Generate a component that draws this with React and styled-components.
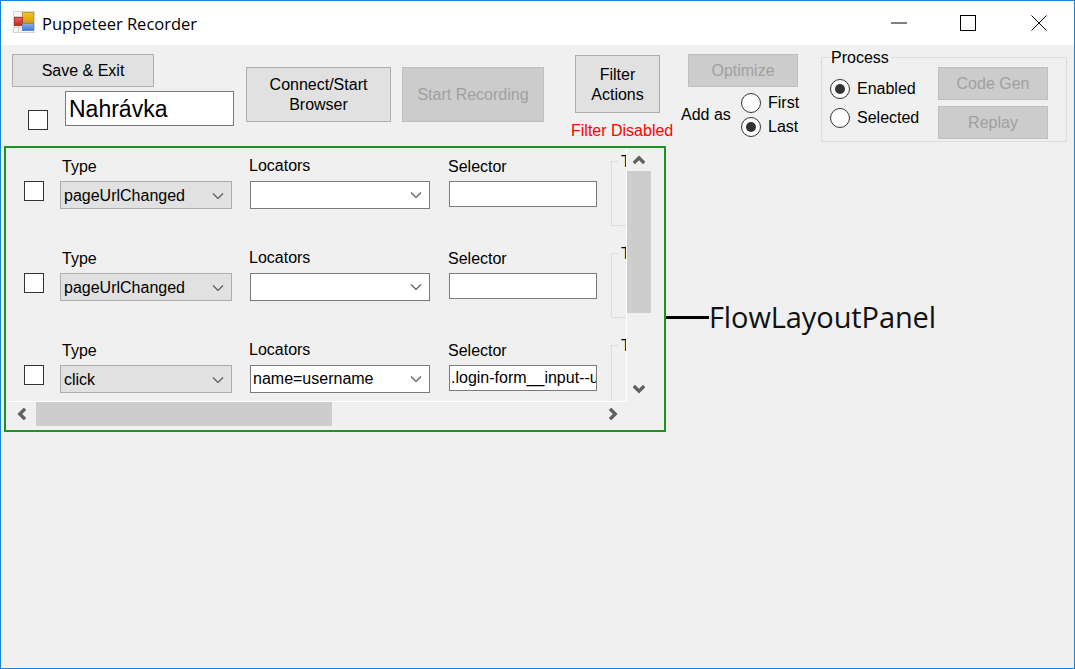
import React from 'react';
import styled, { createGlobalStyle } from 'styled-components';

const GlobalStyle = createGlobalStyle`
  html, body {
    margin: 0;
    padding: 0;
    background: #f0f0f0;
  }
  * {
    box-sizing: border-box;
  }
`;

const Window = styled.div`
  width: 1075px;
  height: 669px;
  border: 1px solid #1883d7;
  background: #f0f0f0;
  font-family: "Liberation Sans", Arial, sans-serif;
  font-size: 16px;
  color: #000;
  overflow: hidden;
`;

const TitleBar = styled.div`
  height: 44px;
  background: #fff;
  display: flex;
  align-items: center;
  padding-left: 12px;
`;

const AppIcon = styled.svg`
  width: 22px;
  height: 22px;
  margin-right: 7px;
  margin-top: -2px;
`;

const Title = styled.div`
  font-family: "Open Sans", sans-serif;
  font-size: 16.5px;
  flex: 1;
`;

const WinButton = styled.div`
  width: 71px;
  height: 44px;
  display: flex;
  align-items: center;
  justify-content: center;
  padding-left: ${p => p.$shift || 0}px;
`;

const Toolbar = styled.div`
  height: 101px;
  display: flex;
  align-items: flex-start;
  padding-left: 11px;
`;

const SaveColumn = styled.div`
  width: 222px;
  padding-top: 9px;
`;

const NameRow = styled.div`
  display: flex;
  align-items: flex-end;
  margin-top: 4px;
  padding-left: 16px;
`;

const Button = styled.div`
  display: flex;
  align-items: center;
  justify-content: center;
  text-align: center;
  line-height: 20px;
  flex-shrink: 0;
  width: ${p => p.$w}px;
  height: ${p => p.$h}px;
  margin-top: ${p => p.$top || 0}px;
  margin-left: ${p => p.$left || 0}px;
  padding-top: ${p => p.$pad || 0}px;
  background: ${p => (p.$disabled ? '#cccccc' : '#e1e1e1')};
  border: 1px solid ${p => (p.$disabled ? '#bfbfbf' : '#adadad')};
  color: ${p => (p.$disabled ? '#a0a0a0' : '#000')};
`;

const CheckBox = styled.div`
  width: 20px;
  height: 20px;
  flex-shrink: 0;
  background: #fff;
  border: 1px solid #333;
`;

const NameInput = styled.div`
  width: 169px;
  height: 35px;
  margin-left: 17px;
  margin-bottom: 4px;
  padding-left: 3px;
  background: #fff;
  border: 1px solid #7a7a7a;
  font-size: 23px;
  line-height: 35px;
`;

const FilterColumn = styled.div`
  width: 113px;
  flex-shrink: 0;
  margin-left: 31px;
  padding-top: 10px;
`;

const FilterStatus = styled.div`
  color: #ff0000;
  margin-top: 9px;
  margin-left: -4px;
  white-space: nowrap;
  line-height: 18px;
`;

const OptimizeColumn = styled.div`
  width: 133px;
  flex-shrink: 0;
  padding-top: 9px;
`;

const AddAsRow = styled.div`
  display: flex;
  align-items: center;
  margin-top: 6px;
  margin-left: -7px;
`;

const AddAsLabel = styled.div`
  width: 60px;
`;

const RadioStack = styled.div`
  display: flex;
  flex-direction: column;
  gap: 4px;
`;

const RadioRow = styled.div`
  display: flex;
  align-items: center;
  gap: 7px;
  height: 20px;
`;

const Radio = styled.div`
  width: 20px;
  height: 20px;
  border-radius: 50%;
  background: #fff;
  border: 1px solid #333;
  display: flex;
  align-items: center;
  justify-content: center;

  &::after {
    content: '';
    width: 10px;
    height: 10px;
    border-radius: 50%;
    background: ${p => (p.$checked ? '#333' : 'transparent')};
  }
`;

const GroupBox = styled.fieldset`
  width: 246px;
  height: 95px;
  margin: 2px 0 0 0;
  padding: 0 0 0 8px;
  border: 1px solid #dcdcdc;
  display: flex;
  flex-shrink: 0;
  min-width: 0;

  legend {
    padding: 2px 2px 0 1px;
    margin-left: 0;
    line-height: 18px;
  }
`;

const ProcessRadios = styled.div`
  width: 108px;
  margin-top: 12px;
  display: flex;
  flex-direction: column;
  gap: 9px;
`;

const ProcessButtons = styled.div`
  display: flex;
  flex-direction: column;
  gap: 6px;
`;

const FlowPanel = styled.div`
  width: 662px;
  height: 286px;
  margin-left: 3px;
  border: 2px solid #1b9420;
  display: grid;
  grid-template-columns: 621px 24px;
  grid-template-rows: 254px 24px;
  flex-shrink: 0;
`;

const Viewport = styled.div`
  overflow: hidden;
  border-right: 1px solid #fff;
  border-bottom: 1px solid #fff;
`;

const ActionRow = styled.div`
  height: 92px;
  display: flex;
  align-items: flex-start;
  padding-left: 18px;
`;

const RowCheck = styled(CheckBox)`
  margin-top: 33px;
`;

const Field = styled.div`
  width: ${p => p.$w}px;
  margin-left: ${p => p.$left}px;
  flex-shrink: 0;
`;

const FieldLabel = styled.div`
  height: 18px;
  line-height: 18px;
  white-space: nowrap;
  margin-top: ${p => p.$top}px;
  margin-left: ${p => p.$left || 0}px;
  margin-bottom: ${p => p.$bottom}px;
`;

const Combo = styled.div`
  height: 28px;
  display: flex;
  align-items: center;
  padding: ${p => (p.$flat ? '1px 7px 0 3px' : '0 7px 0 2px')};
  background: ${p => (p.$flat ? '#e1e1e1' : '#fff')};
  border: 1px solid ${p => (p.$flat ? '#adadad' : '#7a7a7a')};

  svg {
    margin-left: auto;
  }
`;

const TextBox = styled.div`
  height: 26px;
  line-height: 24px;
  padding-left: 1px;
  background: #fff;
  border: 1px solid #7a7a7a;
  overflow: hidden;
  white-space: nowrap;
`;

const NextGroup = styled.div`
  width: 30px;
  height: 65px;
  margin-top: 13px;
  margin-left: 14px;
  flex-shrink: 0;
  border: 1px solid #dcdcdc;
  border-right: none;
  position: relative;

  &::before {
    content: 'T';
    position: absolute;
    left: 6px;
    top: -9px;
    padding-left: 3px;
    line-height: 18px;
    background: #f0f0f0;
  }
`;

const VScroll = styled.div`
  display: flex;
  flex-direction: column;
  align-items: center;
  width: 24px;
  padding-bottom: 2px;
`;

const ScrollArrow = styled.div`
  height: 23px;
  width: 24px;
  display: flex;
  align-items: center;
  justify-content: center;
  flex-shrink: 0;
`;

const VThumb = styled.div`
  width: 24px;
  height: 142px;
  background: #cdcdcd;
`;

const Spacer = styled.div`
  flex: 1;
`;

const HScroll = styled.div`
  display: flex;
  align-items: stretch;
  height: 24px;
  padding-left: 6px;
`;

const HArrow = styled.div`
  width: 24px;
  display: flex;
  align-items: center;
  justify-content: center;
  padding-right: ${p => p.$inset}px;
`;

const HThumb = styled.div`
  width: 296px;
  background: #cdcdcd;
`;

const CalloutRow = styled.div`
  display: flex;
`;

const Callout = styled.div`
  display: flex;
  align-items: center;
  height: 30px;
  margin-top: 156px;
`;

const CalloutLine = styled.div`
  width: 43px;
  height: 3px;
  background: #000;
`;

const CalloutText = styled.div`
  font-family: "Open Sans", sans-serif;
  font-size: 29px;
  letter-spacing: -0.1px;
  color: #111;
  white-space: nowrap;
  margin-top: -2px;
`;

const Chevron = ({ d }) => (
  <svg width="12" height="12" viewBox="0 0 12 12">
    <path d={d} fill="none" stroke="#606060" strokeWidth="3.4" />
  </svg>
);

const DropArrow = () => (
  <svg width="12" height="8" viewBox="0 0 12 8">
    <path d="M1 1.5 L6 6.5 L11 1.5" fill="none" stroke="#555" strokeWidth="1.1" />
  </svg>
);

const actions = [
  { id: 1, type: 'pageUrlChanged', locator: '', selector: '' },
  { id: 2, type: 'pageUrlChanged', locator: '', selector: '' },
  { id: 3, type: 'click', locator: 'name=username', selector: '.login-form__input--username' },
];

const App = () => (
  <Window>
    <GlobalStyle />
    <TitleBar>
      <AppIcon viewBox="0 0 22 22">
        <defs>
          <linearGradient id="iconYellow" x1="0" y1="0" x2="0" y2="1">
            <stop offset="0" stopColor="#f2c438" />
            <stop offset="1" stopColor="#dc9a08" />
          </linearGradient>
          <linearGradient id="iconRed" x1="0" y1="0" x2="0" y2="1">
            <stop offset="0" stopColor="#e8675c" />
            <stop offset="1" stopColor="#b92a22" />
          </linearGradient>
          <linearGradient id="iconBlue" x1="0" y1="0" x2="0" y2="1">
            <stop offset="0" stopColor="#8db4ec" />
            <stop offset="1" stopColor="#3f74cf" />
          </linearGradient>
        </defs>
        <rect x="0.5" y="0.5" width="21" height="21" fill="#f6f6f6" stroke="#d4d4d4" />
        <path d="M1 5.5H9M5.5 15V21M1 16.5H9" stroke="#d4d4d4" />
        <rect x="9.5" y="1.5" width="11" height="10" fill="url(#iconYellow)" stroke="#c89a20" />
        <rect x="1.5" y="6.5" width="8" height="8" fill="url(#iconRed)" stroke="#a83a30" />
        <rect x="9.5" y="12.5" width="11" height="7" fill="url(#iconBlue)" stroke="#5f8ad0" />
      </AppIcon>
      <Title>Puppeteer Recorder</Title>
      <WinButton $shift={5}>
        <svg width="16" height="2" viewBox="0 0 16 2"><path d="M0 1H16" stroke="#000" strokeWidth="1" /></svg>
      </WinButton>
      <WinButton>
        <svg width="16" height="16" viewBox="0 0 16 16"><rect x="0.5" y="0.5" width="15" height="15" fill="none" stroke="#000" /></svg>
      </WinButton>
      <WinButton $shift={1}>
        <svg width="16" height="16" viewBox="0 0 16 16"><path d="M0.5 0.5L15.5 15.5M15.5 0.5L0.5 15.5" stroke="#000" strokeWidth="1" /></svg>
      </WinButton>
    </TitleBar>

    <Toolbar>
      <SaveColumn>
        <Button $w={142} $h={33}>Save &amp; Exit</Button>
        <NameRow>
          <CheckBox />
          <NameInput>Nahrávka</NameInput>
        </NameRow>
      </SaveColumn>
      <Button $w={145} $h={55} $top={22} $left={12}>Connect/Start<br />Browser</Button>
      <Button $w={142} $h={55} $top={22} $left={11} $disabled>Start Recording</Button>
      <FilterColumn>
        <Button $w={85} $h={58} $pad={1}>Filter<br />Actions</Button>
        <FilterStatus>Filter Disabled</FilterStatus>
      </FilterColumn>
      <OptimizeColumn>
        <Button $w={110} $h={33} $disabled>Optimize</Button>
        <AddAsRow>
          <AddAsLabel>Add as</AddAsLabel>
          <RadioStack>
            <RadioRow><Radio />First</RadioRow>
            <RadioRow><Radio $checked />Last</RadioRow>
          </RadioStack>
        </AddAsRow>
      </OptimizeColumn>
      <GroupBox>
        <legend>Process</legend>
        <ProcessRadios>
          <RadioRow><Radio $checked />Enabled</RadioRow>
          <RadioRow><Radio />Selected</RadioRow>
        </ProcessRadios>
        <ProcessButtons>
          <Button $w={110} $h={33} $disabled>Code Gen</Button>
          <Button $w={110} $h={33} $disabled>Replay</Button>
        </ProcessButtons>
      </GroupBox>
    </Toolbar>

    <CalloutRow>
      <FlowPanel>
        <Viewport>
          {actions.map(a => (
            <ActionRow key={a.id}>
              <RowCheck />
              <Field $w={172} $left={16}>
                <FieldLabel $top={10} $left={2} $bottom={5}>Type</FieldLabel>
                <Combo $flat>{a.type}<DropArrow /></Combo>
              </Field>
              <Field $w={180} $left={18}>
                <FieldLabel $top={9} $left={-1} $bottom={6}>Locators</FieldLabel>
                <Combo>{a.locator}<DropArrow /></Combo>
              </Field>
              <Field $w={148} $left={19}>
                <FieldLabel $top={10} $left={-1} $bottom={5}>Selector</FieldLabel>
                <TextBox>{a.selector}</TextBox>
              </Field>
              <NextGroup />
            </ActionRow>
          ))}
        </Viewport>
        <VScroll>
          <ScrollArrow><Chevron d="M0.8 9 L6 3.8 L11.2 9" /></ScrollArrow>
          <VThumb />
          <Spacer />
          <ScrollArrow><Chevron d="M0.8 3 L6 8.2 L11.2 3" /></ScrollArrow>
        </VScroll>
        <HScroll>
          <HArrow $inset={4}><Chevron d="M9 0.8 L3.8 6 L9 11.2" /></HArrow>
          <HThumb />
          <Spacer />
          <HArrow $inset={5}><Chevron d="M3 0.8 L8.2 6 L3 11.2" /></HArrow>
        </HScroll>
      </FlowPanel>
      <Callout>
        <CalloutLine />
        <CalloutText>FlowLayoutPanel</CalloutText>
      </Callout>
    </CalloutRow>
  </Window>
);

export default App;
